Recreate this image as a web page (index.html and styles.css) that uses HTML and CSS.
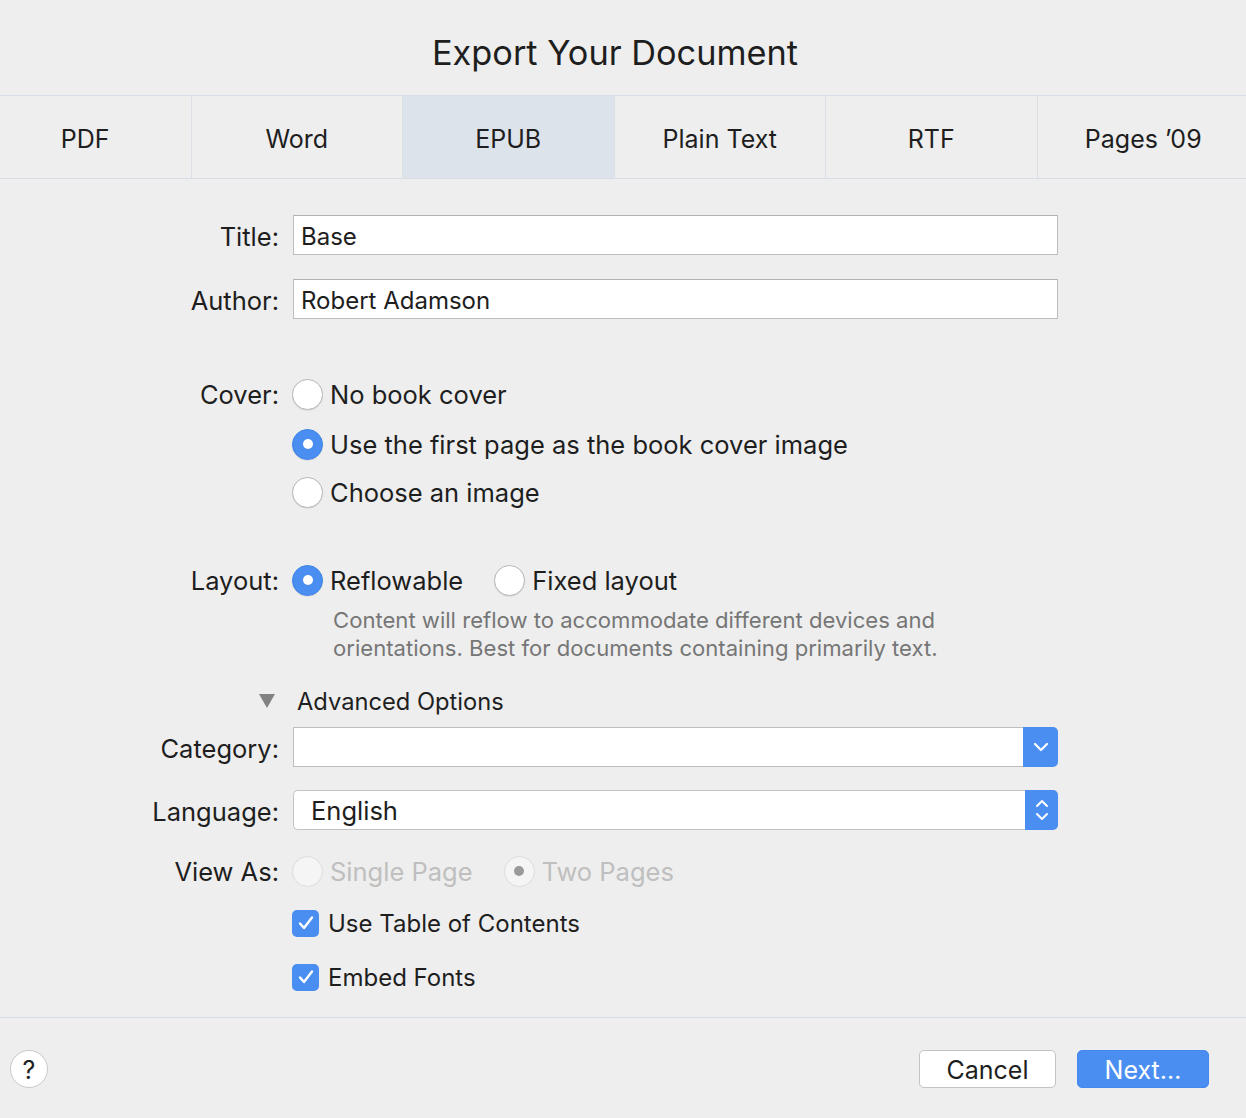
FILE: index.html
```html
<!DOCTYPE html>
<html lang="en">
<head>
<meta charset="utf-8">
<title>Export Your Document</title>
<link rel="stylesheet" href="styles.css">
</head>
<body>
<div class="dialog">
  <header class="head"><h1 class="title">Export Your Document</h1></header>
  <nav class="tabs">
    <div class="tabrow">
      <div class="tab">PDF</div>
      <div class="tab">Word</div>
      <div class="tab tab-on">EPUB</div>
      <div class="tab">Plain Text</div>
      <div class="tab">RTF</div>
      <div class="tab">Pages ’09</div>
    </div>
  </nav>

  <main class="form">
    <div class="row r-title">
      <div class="label">Title:</div>
      <div class="ctl"><div class="field">Base</div></div>
    </div>
    <div class="row r-author">
      <div class="label">Author:</div>
      <div class="ctl"><div class="field">Robert Adamson</div></div>
    </div>

    <div class="row r-cover">
      <div class="label">Cover:</div>
      <div class="ctl"><span class="radio"></span><span class="opt">No book cover</span></div>
    </div>
    <div class="row r-cover2">
      <div class="label"></div>
      <div class="ctl"><span class="radio radio-on"></span><span class="opt">Use the first page as the book cover image</span></div>
    </div>
    <div class="row r-cover3">
      <div class="label"></div>
      <div class="ctl"><span class="radio"></span><span class="opt">Choose an image</span></div>
    </div>

    <div class="row r-layout">
      <div class="label">Layout:</div>
      <div class="ctl">
        <span class="radio radio-on"></span><span class="opt">Reflowable</span>
        <span class="radio radio-gap"></span><span class="opt">Fixed layout</span>
      </div>
    </div>
    <div class="row r-desc">
      <div class="label"></div>
      <div class="ctl desc">Content will reflow to accommodate different devices and<br>orientations. Best for documents containing primarily text.</div>
    </div>

    <div class="row r-adv">
      <div class="label adv-label"><span class="tri"></span></div>
      <div class="ctl adv">Advanced Options</div>
    </div>

    <div class="row r-cat">
      <div class="label">Category:</div>
      <div class="ctl">
        <div class="combo">
          <div class="combo-text"></div>
          <div class="combo-btn">
            <svg width="16" height="10" viewBox="0 0 16 10"><path d="M2 2 L8 8 L14 2" fill="none" stroke="#fff" stroke-width="2.2" stroke-linecap="round" stroke-linejoin="round"/></svg>
          </div>
        </div>
      </div>
    </div>

    <div class="row r-lang">
      <div class="label">Language:</div>
      <div class="ctl">
        <div class="popup">
          <div class="popup-text">English</div>
          <div class="popup-btn">
            <svg width="16" height="26" viewBox="0 0 16 26"><path d="M3 9 L8 4 L13 9" fill="none" stroke="#fff" stroke-width="2" stroke-linecap="round" stroke-linejoin="round"/><path d="M3 17 L8 22 L13 17" fill="none" stroke="#fff" stroke-width="2" stroke-linecap="round" stroke-linejoin="round"/></svg>
          </div>
        </div>
      </div>
    </div>

    <div class="row r-view">
      <div class="label">View As:</div>
      <div class="ctl">
        <span class="radio radio-dis"></span><span class="opt opt-dis">Single Page</span>
        <span class="radio radio-dis radio-dis-on radio-gap"></span><span class="opt opt-dis">Two Pages</span>
      </div>
    </div>

    <div class="row r-toc">
      <div class="label"></div>
      <div class="ctl"><span class="check"><svg width="18" height="16" viewBox="0 0 18 16"><path d="M3 8.5 L7 13 L15 2.5" fill="none" stroke="#fff" stroke-width="2.4" stroke-linecap="round" stroke-linejoin="round"/></svg></span><span class="opt-check">Use Table of Contents</span></div>
    </div>
    <div class="row r-embed">
      <div class="label"></div>
      <div class="ctl"><span class="check"><svg width="18" height="16" viewBox="0 0 18 16"><path d="M3 8.5 L7 13 L15 2.5" fill="none" stroke="#fff" stroke-width="2.4" stroke-linecap="round" stroke-linejoin="round"/></svg></span><span class="opt-check">Embed Fonts</span></div>
    </div>
  </main>

  <footer class="foot">
    <div class="help">?</div>
    <div class="btns">
      <div class="btn">Cancel</div>
      <div class="btn btn-primary">Next…</div>
    </div>
  </footer>
</div>
</body>
</html>
```

FILE: styles.css
```css
* { box-sizing: border-box; }
html, body { margin: 0; padding: 0; }
body {
  background: #eeeeee;
  font-family: Inter, "Noto Sans", "Liberation Sans", sans-serif;
  color: #1f1f1f;
  width: 1246px;
  height: 1118px;
  overflow: hidden;
}
.dialog { width: 1246px; height: 1118px; display: flex; flex-direction: column; }

.head { height: 95px; display: flex; justify-content: center; align-items: flex-start; padding-right: 16px; }
.title { margin: 32px 0 0; font-size: 34.3px; font-weight: 400; line-height: 42px; color: #1e1e1e; }

.tabs {
  height: 84px;
  border-top: 1px solid #d7dde5;
  border-bottom: 1px solid #d7dde5;
  overflow: hidden;
}
.tabrow { display: flex; margin-left: -20px; height: 100%; }
.tab {
  flex: 0 0 211.5px;
  display: flex; align-items: center; justify-content: center;
  padding-top: 4px;
  font-size: 25px;
  color: #1e1e1e;
  border-right: 1px solid #dbe0e6;
}
.tab:last-child { border-right: 0; }
.tab-on { background: #dde3eb; }

.form { flex: 1; padding-top: 36px; }
.row { display: grid; grid-template-columns: 279px 765px; column-gap: 14px; align-items: center; }
.label { text-align: right; font-size: 25.5px; color: #1e1e1e; padding-top: 2px; }
.ctl { display: flex; align-items: center; font-size: 24px; }

.r-title { height: 40px; }
.r-author { height: 40px; margin-top: 24px; }
.r-cover { height: 34px; margin-top: 58px; }
.r-cover2 { height: 34px; margin-top: 16px; }
.r-cover3 { height: 34px; margin-top: 14px; }
.r-layout { height: 34px; margin-top: 54px; }
.r-desc { margin-top: 9px; }
.r-adv { height: 34px; margin-top: 22px; }
.r-cat { height: 40px; margin-top: 9px; }
.r-lang { height: 40px; margin-top: 23px; }
.r-view { height: 34px; margin-top: 24px; }
.r-toc { height: 34px; margin-top: 18px; }
.r-embed { height: 34px; margin-top: 20px; }

.r-cover .label, .r-layout .label, .r-view .label { padding-top: 0; }

.field {
  width: 765px; height: 40px;
  background: #fff;
  border: 1px solid #bdbdbd;
  border-top-color: #b3b3b3;
  padding: 3px 7px 0;
  display: flex; align-items: center;
  font-size: 24px; color: #1e1e1e;
}

.radio {
  width: 31px; height: 31px; border-radius: 50%;
  background: #fff;
  border: 1px solid #b9b9b9;
  box-shadow: 0 0.5px 1px rgba(0,0,0,0.12);
  flex: 0 0 auto;
  position: relative;
  margin-left: -1px;
  margin-right: 7px;
}
.radio-on { background: #4a8ef2; border-color: #3f84ea; }
.radio-on::after {
  content: ""; position: absolute; left: 50%; top: 50%;
  width: 10px; height: 10px; margin: -5px 0 0 -5px;
  border-radius: 50%; background: #fff;
}
.radio-gap { margin-left: 31px; }
.radio-dis { background: #f5f5f5; border-color: #dcdcdc; box-shadow: none; }
.radio-dis-on::after {
  content: ""; position: absolute; left: 50%; top: 50%;
  width: 10px; height: 10px; margin: -5px 0 0 -5px;
  border-radius: 50%; background: #9a9a9a;
}
.opt { font-size: 25.5px; color: #1e1e1e; white-space: nowrap; }
.opt-dis { color: #bfbfbf; }
.opt-check { font-size: 24px; color: #1e1e1e; white-space: nowrap; }

.desc { display: block; padding-left: 40px; font-size: 22.1px; line-height: 28px; color: #767676; white-space: nowrap; }

.adv-label { position: relative; height: 34px; }
.tri {
  position: absolute; right: 4px; top: 10px;
  width: 0; height: 0;
  border-left: 8.5px solid transparent;
  border-right: 8.5px solid transparent;
  border-top: 14px solid #828282;
}
.adv { font-size: 23.7px; padding-left: 4px; }

.combo, .popup {
  width: 765px; height: 40px; display: flex;
}
.combo-text {
  flex: 1; background: #fff;
  border: 1px solid #bdbdbd; border-right: 0;
}
.combo-btn {
  width: 35px; background: #4a8ef2;
  border-radius: 0 5px 5px 0;
  display: flex; align-items: center; justify-content: center;
}
.popup-text {
  flex: 1; background: #fff;
  border: 1px solid #c4c4c4; border-right: 0;
  border-radius: 5px 0 0 5px;
  padding-left: 17px; display: flex; align-items: center;
  font-size: 25.5px; color: #1e1e1e;
}
.popup-btn {
  width: 33px; background: #4a8ef2;
  border-radius: 0 5px 5px 0;
  display: flex; align-items: center; justify-content: center;
}

.check {
  width: 27px; height: 27px; border-radius: 5px;
  background: #4a8ef2;
  display: flex; align-items: center; justify-content: center;
  margin-left: -1px;
  margin-right: 9px;
  flex: 0 0 auto;
}

.foot {
  height: 101px;
  border-top: 1px solid #d5dbe3;
  display: flex; align-items: flex-start; justify-content: space-between;
  padding: 32px 37px 0 10px;
}
.help {
  width: 38px; height: 38px; border-radius: 50%;
  background: #fff; border: 1px solid #c9c9c9;
  display: flex; align-items: center; justify-content: center;
  padding-top: 2px;
  font-size: 25px; color: #1e1e1e;
}
.btns { display: flex; gap: 21px; }
.btn {
  height: 38px; border-radius: 5px;
  display: flex; align-items: center; justify-content: center;
  padding-top: 1px;
  font-size: 25px;
  background: #fff; border: 1px solid #c3c3c3;
  width: 137px; color: #1e1e1e;
}
.btn-primary { width: 132px; background: #4a8ef2; border-color: #4487ee; color: #fff; }
```
